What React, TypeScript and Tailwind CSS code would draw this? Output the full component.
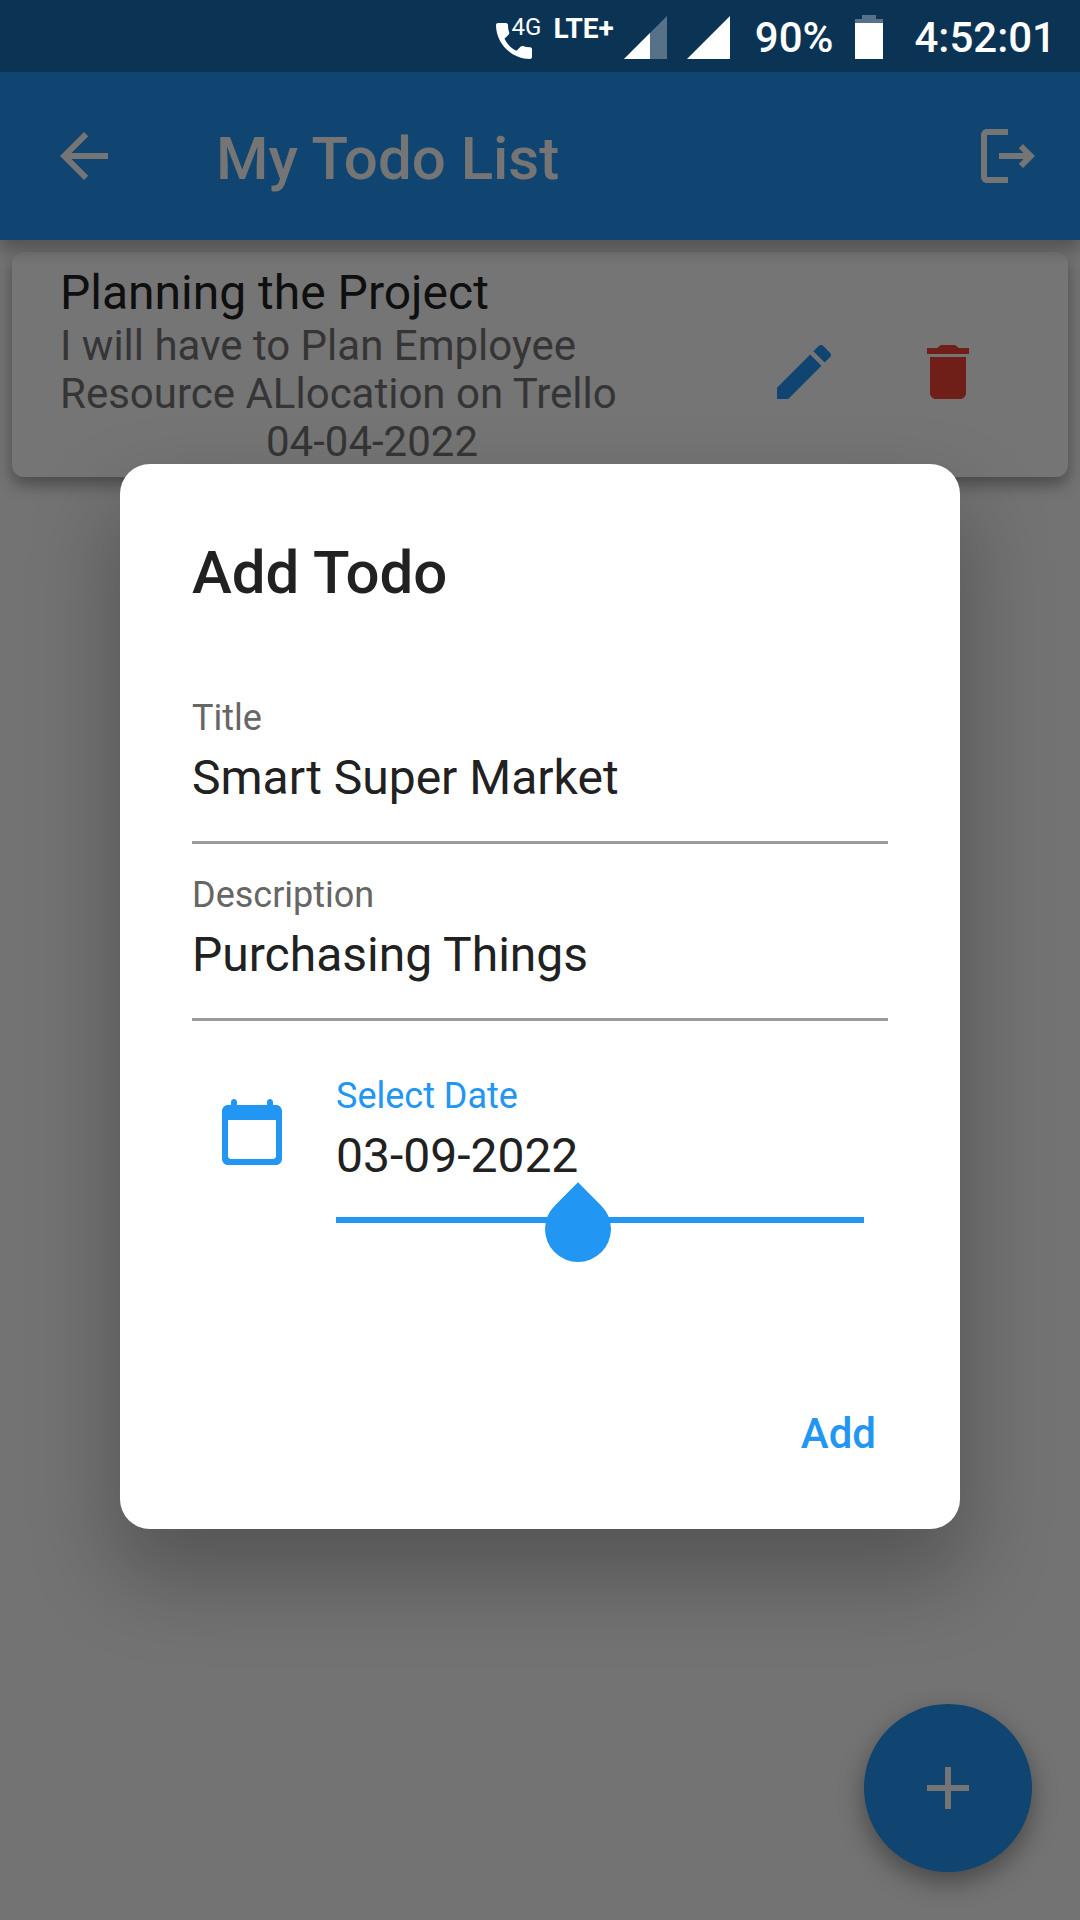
import React, { useState } from "react";

const icons = {
  back: "M20 11H7.83l5.59-5.59L12 4l-8 8 8 8 1.41-1.41L7.83 13H20v-2z",
  logout:
    "M17 8l-1.41 1.41L17.17 11H9v2h8.17l-1.58 1.59L17 16l4-4-4-4zM5 5h7V3H5c-1.1 0-2 .9-2 2v14c0 1.1.9 2 2 2h7v-2H5V5z",
  edit: "M3 17.25V21h3.75L17.81 9.94l-3.75-3.75L3 17.25zM20.71 7.04c.39-.39.39-1.02 0-1.41l-2.34-2.34c-.39-.39-1.02-.39-1.41 0l-1.83 1.83 3.75 3.75 1.83-1.83z",
  trash:
    "M6 19c0 1.1.9 2 2 2h8c1.1 0 2-.9 2-2V7H6v12zM19 4h-3.5l-.71-.71c-.18-.18-.44-.29-.7-.29H9.91c-.26 0-.52.11-.7.29L8.5 4H5v2h14V4z",
  plus: "M19 13h-6v6h-2v-6H5v-2h6V5h2v6h6v2z",
  calendar:
    "M20 3h-1V2c0-.55-.45-1-1-1s-1 .45-1 1v1H7V2c0-.55-.45-1-1-1s-1 .45-1 1v1H4c-1.1 0-2 .9-2 2v16c0 1.1.9 2 2 2h16c1.1 0 2-.9 2-2V5c0-1.1-.9-2-2-2zm-1 18H5c-.55 0-1-.45-1-1V8h16v12c0 .55-.45 1-1 1z",
};

function Icon({ name }: { name: keyof typeof icons }) {
  return (
    <svg viewBox="0 0 24 24" className="size-[72px] shrink-0" fill="currentColor" aria-hidden="true">
      <path d={icons[name]} />
    </svg>
  );
}

function StatusBar() {
  return (
    <div className="relative z-20 flex h-[72px] items-center justify-end bg-[#0b3354] pt-0.5 pr-6 font-medium text-white">
      <div className="flex h-[52px] items-start">
        <svg viewBox="0 0 36 36" className="mt-3 size-9" fill="#fff" aria-hidden="true">
          <path d="M2 0h8c1 0 2 1 2 2 0 3 .4 5 1.200 7.400.3.800 0 1.500-.5 2.100l-4.200 4.300c3 5.700 6.500 9.200 12 12l4.300-4.300c.6-.5 1.300-.7 2.100-.5 2.300.8 4.800 1.200 7.300 1.200 1 0 1.800.8 1.800 1.900V34c0 1.200-.8 2-2 2C15.500 36 0 20.500 0 2 0 .8.800 0 2 0z" />
        </svg>
        <span className="-ml-5 text-[24px] leading-8 font-normal">4G</span>
        <span className="ml-3 text-[28px] leading-9 font-bold">LTE+</span>
      </div>
      <svg viewBox="0 0 43 43" className="ml-2.5 size-[43px]" aria-hidden="true">
        <path d="M0 43 43 0V43z" fill="#577189" />
        <path d="M0 43 26 17V43z" fill="#fff" />
      </svg>
      <svg viewBox="0 0 43 43" className="ml-5 size-[43px]" aria-hidden="true">
        <path d="M0 43 43 0V43z" fill="#fff" />
      </svg>
      <span className="ml-[25px] text-[42px]">90%</span>
      <svg viewBox="0 0 28 44" className="mx-[22px] h-11 w-7" aria-hidden="true">
        <path d="M0 4h7V0h14v4h7v5H0z" fill="#577189" />
        <path d="M0 8h28v36H0z" fill="#fff" />
      </svg>
      <time className="ml-[9px] text-[42px]">4:52:01</time>
    </div>
  );
}

interface FieldProps {
  id: string;
  label: string;
  value: string;
  onChange: (value: string) => void;
}

function Field({ id, label, value, onChange }: FieldProps) {
  return (
    <div className="flex h-[177px] flex-col border-b-[3px] border-[#9b9b9b] pt-[30px]">
      <label htmlFor={id} className="text-[36px] leading-[42px] text-[#666]">
        {label}
      </label>
      <input
        id={id}
        value={value}
        onChange={(e) => onChange(e.target.value)}
        className="mt-[9px] h-[60px] w-full text-[48px] leading-[60px] text-[#212121] outline-none"
      />
    </div>
  );
}

export default function App() {
  const [title, setTitle] = useState("Smart Super Market");
  const [description, setDescription] = useState("Purchasing Things");
  const [date, setDate] = useState("03-09-2022");

  return (
    <div className="relative flex min-h-screen flex-col bg-[#fafafa] font-[Roboto,sans-serif]">
      <StatusBar />
      <header className="relative z-[1] flex h-[168px] items-center bg-[#2196f3] px-12 text-white shadow-[0_10px_16px_rgba(0,0,0,0.28)]">
        <button aria-label="Back">
          <Icon name="back" />
        </button>
        <h1 className="ml-24 flex-1 pt-1.5 text-[60px] leading-[70px] font-medium">My Todo List</h1>
        <button aria-label="Log out" className="-mr-3">
          <Icon name="logout" />
        </button>
      </header>

      <main className="flex-1 p-3">
        <article className="flex rounded-xl bg-white px-12 pt-3 pb-[11px] shadow-[0_8px_16px_rgba(0,0,0,0.35)]">
          <div className="flex-1">
            <h2 className="text-[48px] leading-[58px] text-[#212121]">Planning the Project</h2>
            <div className="text-[42px] leading-[48px] text-[#757575]">
              <p>I will have to Plan Employee Resource ALlocation on Trello</p>
              <p className="text-center">04-04-2022</p>
            </div>
          </div>
          <div className="mt-9 ml-12 flex items-start">
            <button aria-label="Edit" className="p-9 text-[#2196f3]">
              <Icon name="edit" />
            </button>
            <button aria-label="Delete" className="p-9 text-[#f44336]">
              <Icon name="trash" />
            </button>
          </div>
        </article>
      </main>

      <button
        aria-label="Add item"
        className="absolute right-12 bottom-12 flex size-[168px] items-center justify-center rounded-full bg-[#2196f3] text-white shadow-[0_10px_26px_rgba(0,0,0,0.38)]"
      >
        <Icon name="plus" />
      </button>

      <div className="absolute inset-0 z-10 flex items-center justify-center bg-black/54 px-[120px] pt-[72px]">
        <form
          role="dialog"
          aria-labelledby="dialog-title"
          onSubmit={(e) => e.preventDefault()}
          className="w-full rounded-[30px] bg-white px-[72px] pt-[73px] pb-[47px] shadow-[0_44px_84px_6px_rgba(0,0,0,0.26)]"
        >
          <h2 id="dialog-title" className="text-[60px] leading-[72px] font-medium text-[#212121]">
            Add Todo
          </h2>
          <div className="mt-[58px]">
            <Field id="title" label="Title" value={title} onChange={setTitle} />
            <Field id="description" label="Description" value={description} onChange={setDescription} />
          </div>
          <div className="mt-[54px] flex px-6">
            <div className="mt-[21px] mr-12 text-[#2196f3]">
              <Icon name="calendar" />
            </div>
            <div className="relative flex-1 border-b-[6px] border-[#2196f3] pb-[31px]">
              <label htmlFor="date" className="block text-[36px] leading-[42px] text-[#2196f3]">
                Select Date
              </label>
              <input
                id="date"
                value={date}
                onChange={(e) => setDate(e.target.value)}
                className="mt-[9px] block h-[60px] w-full text-[48px] leading-[60px] text-[#212121] outline-none"
              />
              <span className="absolute -bottom-[45px] left-[209px] size-[66px] rotate-45 rounded-full rounded-tl-none bg-[#2196f3]" />
            </div>
          </div>
          <div className="mt-[163px] flex justify-end">
            <button type="submit" className="px-3 py-6 text-[42px] leading-[48px] font-medium text-[#2196f3]">
              Add
            </button>
          </div>
        </form>
      </div>
    </div>
  );
}
